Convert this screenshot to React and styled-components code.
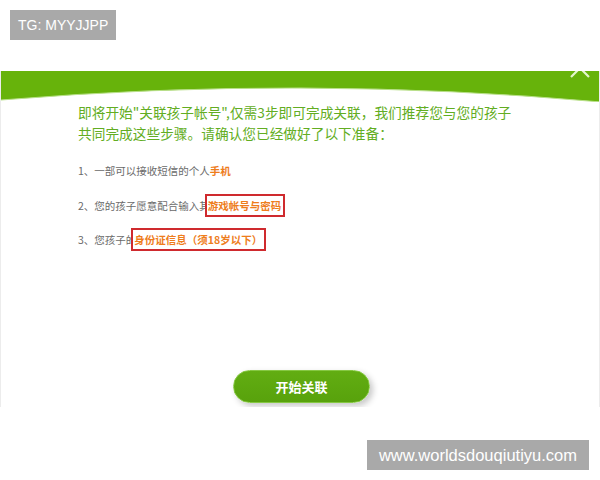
import React from "react";
import styled, { createGlobalStyle } from "styled-components";

const GlobalStyle = createGlobalStyle`
  body {
    margin: 0;
    background: #fff;
    font-family: "Noto Sans CJK SC", "Noto Sans", sans-serif;
  }
`;

const Page = styled.div`
  width: 600px;
  height: 480px;
  display: flex;
  flex-direction: column;
  overflow: hidden;
`;

const TopArea = styled.div`
  height: 71px;
  box-sizing: border-box;
  padding: 10px;
`;

const Watermark = styled.div`
  display: inline-flex;
  align-items: center;
  height: 30px;
  padding: 0 ${(p) => p.$pad || 8}px;
  background: #a9a9a9;
  color: #fff;
  font-family: "Liberation Sans", Arial, sans-serif;
  font-size: ${(p) => p.$size || 14}px;
`;

const Panel = styled.div`
  position: relative;
  height: 336px;
  box-sizing: border-box;
  border-left: 1px solid #ececec;
  border-right: 1px solid #ececec;
  overflow: hidden;
  display: flex;
  flex-direction: column;
`;

const Header = styled.div`
  position: relative;
  height: 31px;
  background: #67b30b;
  flex-shrink: 0;
`;

const Wave = styled.svg`
  position: absolute;
  left: 0;
  bottom: 0;
  width: 600px;
  height: 31px;
`;

const Close = styled.svg`
  position: absolute;
  right: 8px;
  top: -14px;
  width: 22px;
  height: 22px;
`;

const Intro = styled.p`
  margin: 0;
  padding-left: 77px;
  font-size: 13.7px;
  line-height: 21px;
  color: #62ad22;
  white-space: nowrap;
`;

const List = styled.div`
  margin-top: 16px;
  padding-left: 77px;
  display: flex;
  flex-direction: column;
  gap: 13.5px;
`;

const Item = styled.div`
  height: 21px;
  display: flex;
  align-items: center;
  font-size: 10.5px;
  color: #6a6a6a;
  white-space: nowrap;
`;

const Mark = styled.span`
  position: relative;
  color: #ee7d1c;
  font-weight: bold;
  ${(p) =>
    p.$boxed &&
    `
    display: inline-block;
    margin-left: -5px;
    padding: 2px 2px 2px 1px;
    border: 2px solid #cf2a2e;
    background: #fff;
    line-height: 15px;
  `}
`;

const Button = styled.button`
  align-self: center;
  margin-top: 120px;
  margin-left: 3px;
  width: 137px;
  height: 33px;
  border: 1px solid #86c843;
  border-radius: 17px;
  background: linear-gradient(#62ad12, #58a20c);
  box-shadow: 3px 3px 6px rgba(0, 0, 0, 0.22);
  color: #fff;
  font-family: "Noto Sans CJK SC", sans-serif;
  font-weight: bold;
  font-size: 13px;
  cursor: pointer;
`;

const BottomArea = styled.div`
  display: flex;
  justify-content: flex-end;
  padding: 33px 11px 0 0;
`;

export default function App() {
  return (
    <Page>
      <GlobalStyle />
      <TopArea>
        <Watermark>TG: MYYJJPP</Watermark>
      </TopArea>
      <Panel>
        <Header>
          <Wave viewBox="0 0 600 31" preserveAspectRatio="none">
            <path d="M0 29 Q300 4 600 31 L600 31 L0 31 Z" fill="#fff" />
            <path d="M0 29 Q300 4 600 31" fill="none" stroke="#b9e08a" strokeWidth="1" />
          </Wave>
          <Close viewBox="0 0 22 22">
            <path d="M2 2 L20 20 M20 2 L2 20" stroke="#e3f5cd" strokeWidth="2.2" />
          </Close>
        </Header>
        <Intro>
          即将开始"关联孩子帐号",仅需3步即可完成关联，我们推荐您与您的孩子
          <br />
          共同完成这些步骤。请确认您已经做好了以下准备：
        </Intro>
        <List>
          <Item>
            1、一部可以接收短信的个人<Mark>手机</Mark>
          </Item>
          <Item>
            2、您的孩子愿意配合输入其<Mark $boxed>游戏帐号与密码</Mark>
          </Item>
          <Item>
            3、您孩子的<Mark $boxed>身份证信息（须18岁以下）</Mark>
          </Item>
        </List>
        <Button>开始关联</Button>
      </Panel>
      <BottomArea>
        <Watermark $size={16.5} $pad={12}>www.worldsdouqiutiyu.com</Watermark>
      </BottomArea>
    </Page>
  );
}
